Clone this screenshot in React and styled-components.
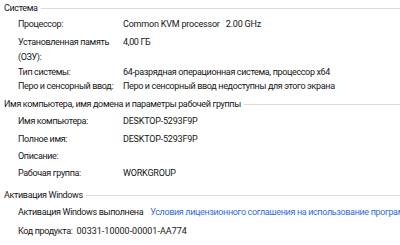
import React from "react";
import styled, { createGlobalStyle } from "styled-components";

const GlobalStyle = createGlobalStyle`
    html, body {
        margin: 0;
        padding: 0;
        background: #ffffff;
    }
    body {
        font-family: Roboto, "Noto Sans", sans-serif;
        font-size: 9px;
        letter-spacing: -0.35px;
        color: #161616;
    }
`

const Page = styled.div`
    width: 400px;
    height: 245px;
    overflow: hidden;
    padding-left: 4px;
    box-sizing: border-box;
`

const Section = styled.div`
    margin-top: ${p => p.$top || 0}px;
`

const Header = styled.div`
    height: 16px;
    display: flex;
    align-items: center;
    white-space: nowrap;

    &::after{
        content: "";
        flex: 1;
        height: 1px;
        margin-left: 3px;
        background-color: #dcdcdc;
    }
`

const Row = styled.div`
    display: grid;
    grid-template-columns: 105px 1fr;
    padding-left: 14px;
    line-height: 15px;
    margin-top: ${p => p.$gap || 0}px;
    white-space: nowrap;

    .label{
        white-space: normal;
    }
`

const Value = styled.div`
    letter-spacing: ${p => p.$latin ? "-0.2px" : "-0.35px"};
`

const LineRow = styled.div`
    display: flex;
    padding-left: 14px;
    line-height: 15px;
    margin-top: ${p => p.$gap || 0}px;
    white-space: nowrap;
`

const Link = styled.span`
    color: #2f6fd4;
    margin-left: 7px;
`

const Code = styled.span`
    margin-left: 4px;
    letter-spacing: 0;
`

const system = [
    { label: "Процессор:", value: "Common KVM processor\u00a0\u00a0\u00a02.00 GHz", gap: 0.5, latin: true },
    { label: "Установленная память (ОЗУ):", value: "4,00 ГБ", gap: 3 },
    { label: "Тип системы:", value: "64-разрядная операционная система, процессор x64", gap: 0 },
    { label: "Перо и сенсорный ввод:", value: "Перо и сенсорный ввод недоступны для этого экрана", gap: -0.5 }
]

const computer = [
    { label: "Имя компьютера:", value: "DESKTOP-5293F9P", gap: 1.5 },
    { label: "Полное имя:", value: "DESKTOP-5293F9P", gap: 3 },
    { label: "Описание:", value: "", gap: 2 },
    { label: "Рабочая группа:", value: "WORKGROUP", gap: 2 }
]

const App = () => {
    return(
        <Page>
            <GlobalStyle />
            <Section>
                <Header>Система</Header>
                {system.map(r=>(
                    <Row key={r.label} $gap={r.gap}>
                        <div className="label">{r.label}</div>
                        <Value $latin={r.latin}>{r.value}</Value>
                    </Row>
                ))}
            </Section>
            <Section $top={2}>
                <Header>Имя компьютера, имя домена и параметры рабочей группы</Header>
                {computer.map(r=>(
                    <Row key={r.label} $gap={r.gap}>
                        <div>{r.label}</div>
                        <Value $latin>{r.value}</Value>
                    </Row>
                ))}
            </Section>
            <Section $top={6.5}>
                <Header>Активация Windows</Header>
                <LineRow $gap={1.5}>
                    Активация Windows выполнена
                    <Link>Условия лицензионного соглашения на использование программного обеспечения корпорации Майкрософт</Link>
                </LineRow>
                <LineRow $gap={4}>
                    Код продукта:<Code>00331-10000-00001-AA774</Code>
                </LineRow>
            </Section>
        </Page>
    )
};

export default App;
